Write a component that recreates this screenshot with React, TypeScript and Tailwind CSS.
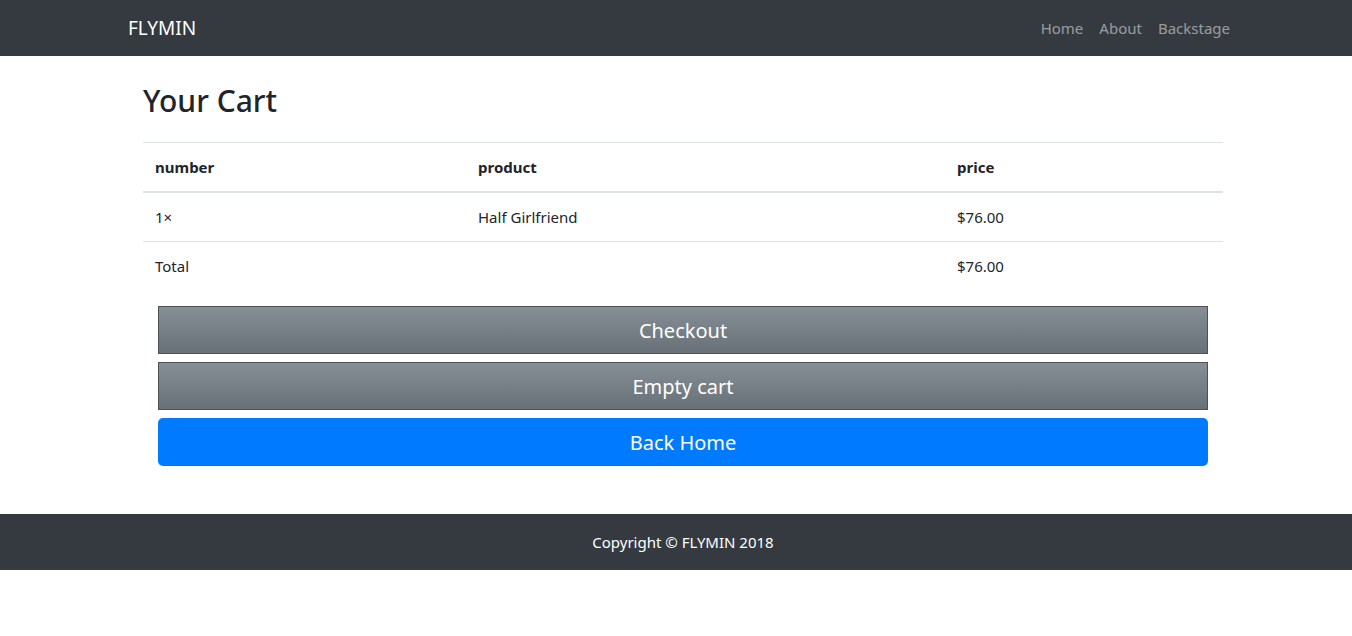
import React from 'react'

const items = [{ qty: 1, name: 'Half Girlfriend', price: 76 }]

export default function App() {
  const total = items.reduce((sum, it) => sum + it.qty * it.price, 0)

  return (
    <div className="min-h-[636px] overflow-hidden bg-white text-[#212529] font-['Noto_Sans',sans-serif]">
      <div className="w-[1366px]">
        {/* Navbar */}
        <nav className="h-14 bg-[#343a40]">
          <div className="mx-auto flex h-full w-[1140px] items-center justify-between px-[15px]">
            <a className="text-[19px] text-white">FLYMIN</a>
            <ul className="flex items-center text-[15px] text-white/50">
              <li className="px-2">Home</li>
              <li className="px-2">About</li>
              <li className="px-2">Backstage</li>
            </ul>
          </div>
        </nav>

        {/* Cart */}
        <main className="mx-auto w-[1080px] pt-[26px]">
          <h2 className="mb-[22px] text-[30px] leading-[38px] font-medium">Your Cart</h2>

          <table className="w-full border-collapse text-[15px]">
            <thead>
              <tr className="border-t border-b-2 border-[#dee2e6]">
                <th className="h-[49px] w-[323px] px-3 text-left font-bold">number</th>
                <th className="w-[479px] px-3 text-left font-bold">product</th>
                <th className="px-3 text-left font-bold">price</th>
              </tr>
            </thead>
            <tbody>
              {items.map((it, i) => (
                <tr key={i} className="border-b border-[#dee2e6]">
                  <td className="h-[50px] px-3">{it.qty}×</td>
                  <td className="px-3">{it.name}</td>
                  <td className="px-3">${(it.qty * it.price).toFixed(2)}</td>
                </tr>
              ))}
              <tr>
                <td className="h-[49px] px-3">Total</td>
                <td className="px-3"></td>
                <td className="px-3">${total.toFixed(2)}</td>
              </tr>
            </tbody>
          </table>

          <div className="mt-[15px] flex flex-col gap-2 px-[15px]">
            <button className="h-12 w-full border border-[#4c5157] bg-gradient-to-b from-[#868f95] to-[#687178] pt-[3px] text-xl text-white">
              Checkout
            </button>
            <button className="h-12 w-full border border-[#4c5157] bg-gradient-to-b from-[#868f95] to-[#687178] pt-[3px] text-xl text-white">
              Empty cart
            </button>
            <button className="h-12 w-full rounded-[5px] bg-[#007bff] pt-[3px] text-xl text-white">
              Back Home
            </button>
          </div>
        </main>

        {/* Footer */}
        <footer className="mt-12 flex h-14 items-center justify-center bg-[#343a40] pt-[2px] text-[15px] text-white">
          Copyright © FLYMIN 2018
        </footer>
      </div>
    </div>
  )
}
